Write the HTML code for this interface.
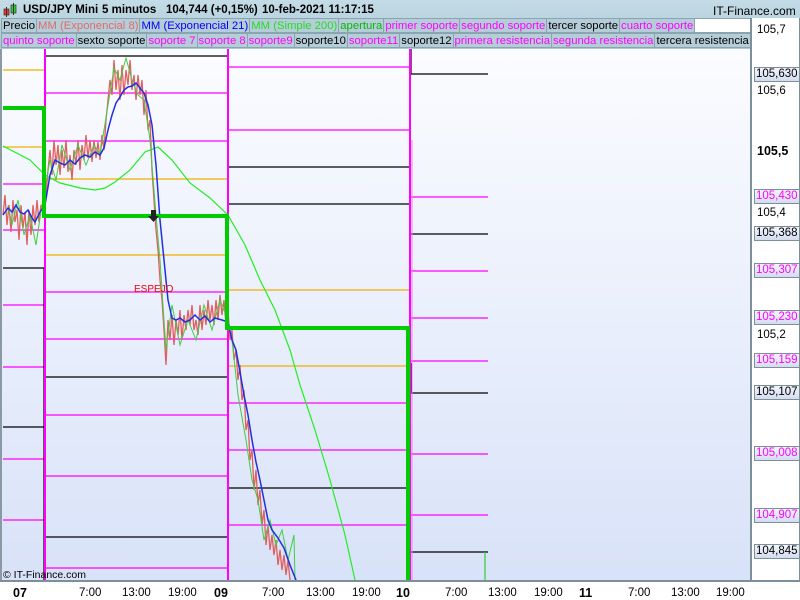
<!DOCTYPE html>
<html><head><meta charset="utf-8"><style>
*{margin:0;padding:0;box-sizing:border-box}
body{width:800px;height:600px;overflow:hidden;font-family:"Liberation Sans",sans-serif;background:#fff;position:relative}
#hdr{position:absolute;left:0;top:0;width:800px;height:49px;background:linear-gradient(#c4dce6,#a9c9d6);}
.t{position:absolute;top:4px;font-size:11.5px;font-weight:bold;color:#000;white-space:nowrap}
.row{position:absolute;left:1px;height:15px;display:flex;font-size:11.3px;line-height:14px;width:750px;overflow:hidden}
.row span{background:#b5cdd8;border:1px solid #8aa4b0;padding:0 1px;margin-right:-1px;white-space:nowrap}
#ax{position:absolute;left:750px;top:18px;width:50px;height:582px;background:#fff;border-left:2px solid #7d909a;border-right:1px solid #7d909a}
.lb{position:absolute;left:754px;font-size:11.5px;line-height:13px;height:15px;padding:0 1px;white-space:nowrap}
.bx{border:1px solid #7d909a;background:linear-gradient(#f2f5fc,#d3dcf0)}
.m{color:#f0f}
#bt{position:absolute;left:0;top:580px;width:800px;height:20px;background:#fff;border-top:2px solid #7d909a;font-size:11.5px}
#bt span{position:absolute;top:5px}
</style></head><body>
<svg style="position:absolute;left:0;top:0" width="800" height="600">
<defs><linearGradient id="g" x1="0" y1="0" x2="0" y2="1"><stop offset="0" stop-color="#fbfcff"/><stop offset="1" stop-color="#d8e2f8"/></linearGradient></defs>
<rect x="0" y="49" width="751" height="532" fill="url(#g)"/>
<line x1="1" y1="0" x2="1" y2="600" stroke="#8a9aa4" stroke-width="2"/>
<g stroke-width="1.2" fill="none">
<g stroke="#f0b000"><line x1="3" y1="70" x2="44" y2="70"/><line x1="3" y1="147" x2="44" y2="147"/></g>
<g stroke="#f0f"><line x1="3" y1="184" x2="44" y2="184"/><line x1="3" y1="230" x2="44" y2="230"/><line x1="3" y1="305" x2="44" y2="305"/><line x1="3" y1="367" x2="44" y2="367"/><line x1="3" y1="459" x2="44" y2="459"/><line x1="3" y1="520" x2="44" y2="520"/></g>
<g stroke="#000"><polyline points="3,268 44,268 44,580"/><polyline points="3,427 44,427"/></g>
<g stroke="#000"><polyline points="45,56 227,56"/><line x1="45" y1="377" x2="227" y2="377"/><line x1="45" y1="537" x2="227" y2="537"/></g>
<g stroke="#f0f"><line x1="45" y1="93" x2="227" y2="93"/><line x1="45" y1="141" x2="227" y2="141"/><line x1="45" y1="292" x2="227" y2="292"/><line x1="45" y1="339" x2="227" y2="339"/><line x1="45" y1="415" x2="227" y2="415"/><line x1="45" y1="476" x2="227" y2="476"/><line x1="45" y1="568" x2="227" y2="568"/></g>
<g stroke="#f0b000"><line x1="45" y1="179" x2="227" y2="179"/><line x1="45" y1="255" x2="227" y2="255"/></g>
<g stroke="#f0f"><line x1="228" y1="67" x2="409" y2="67"/><line x1="228" y1="130" x2="409" y2="130"/><line x1="228" y1="403" x2="409" y2="403"/><line x1="228" y1="450" x2="409" y2="450"/><line x1="228" y1="525" x2="409" y2="525"/></g>
<g stroke="#000"><line x1="228" y1="167" x2="409" y2="167"/><line x1="228" y1="204" x2="409" y2="204"/><line x1="228" y1="488" x2="409" y2="488"/></g>
<g stroke="#f0b000"><line x1="228" y1="290" x2="409" y2="290"/><line x1="228" y1="366" x2="409" y2="366"/></g>
<g stroke="#000"><polyline points="411,49 411,74 488,74"/><line x1="411" y1="234" x2="488" y2="234"/><polyline points="411,363 411,393 488,393"/><line x1="411" y1="552" x2="488" y2="552"/></g>
<g stroke="#f0f"><line x1="411" y1="197" x2="488" y2="197"/><line x1="411" y1="271" x2="488" y2="271"/><line x1="411" y1="318" x2="488" y2="318"/><line x1="411" y1="361" x2="488" y2="361"/><line x1="411" y1="454" x2="488" y2="454"/><line x1="411" y1="515" x2="488" y2="515"/></g>
<line x1="485" y1="552" x2="485" y2="580" stroke="#3c3"/>
<g stroke="#f0f" stroke-width="2"><line x1="45" y1="49" x2="45" y2="580"/><line x1="228" y1="49" x2="228" y2="580"/><line x1="410" y1="49" x2="410" y2="580"/></g>
<polyline stroke="#2e2" points="3,146 30,160 45,175 60,183 80,188 95,190 105,188 115,182 130,170 145,152 158,147 172,160 190,183 210,198 228,215 245,245 260,280 275,310 290,350 300,385 315,430 330,480 345,535 355,580"/>
<polyline stroke="#e06060" stroke-width="1.3" points="3,215 5,195 7,225 9,205 11,232 13,200 15,222 17,210 19,240 21,205 23,228 25,212 27,245 29,210 31,235 33,205 35,225 37,200 39,222 41,205 43,212 46,195 48,170 50,150 52,175 54,140 56,165 58,145 60,175 62,150 64,168 66,140 68,172 70,155 72,180 74,150 76,165 78,140 80,170 82,145 84,160 86,135 88,158 90,140 92,162 94,140 96,158 98,142 100,160 102,135 104,150 106,120 108,100 110,80 112,95 114,60 116,90 118,70 120,100 122,65 124,95 126,70 128,85 130,60 132,90 134,75 136,100 138,75 140,95 142,80 144,115 146,90 148,130 150,120 152,170 154,200 156,230 158,250 160,280 162,300 164,330 166,365 168,320 170,340 172,315 174,345 176,320 178,335 180,310 182,340 184,315 186,330 188,310 190,325 192,305 194,330 196,320 198,335 200,305 202,330 204,310 206,325 208,300 210,320 212,305 214,325 216,300 218,320 220,295 222,315 224,300 226,325 228,310 230,340 232,330 234,360 236,350 238,380 240,365 242,400 244,390 246,430 248,420 250,460 252,450 254,490 256,470 258,505 260,490 262,525 264,510 266,545 268,525 270,550 272,535 274,555 276,540 278,565 280,550 282,570 284,555 286,575 288,560 290,580"/>
<polyline stroke="#4c4" stroke-width="1" points="8,205 12,225 18,200 24,235 30,215 36,245 42,205 50,160 56,180 62,145 70,170 78,145 86,165 94,145 100,155 108,105 114,68 120,80 126,58 132,80 138,95 144,100 150,140 156,215 160,260 166,350 172,305 180,345 188,320 196,340 204,305 212,330 220,300 226,315 232,340 238,395 246,440 252,480 258,500 264,540 270,520 276,545 282,530 288,560 294,535 295,580"/>
<polyline stroke="#2030e0" stroke-width="1.5" points="3,215 8,208 12,212 16,205 20,212 24,214 28,210 32,218 35,222 40,212 45,205 50,175 55,160 60,163 65,165 70,160 75,164 80,158 85,155 90,157 95,152 100,155 104,148 108,130 112,115 116,103 120,97 124,90 128,87 132,86 136,83 140,88 144,93 148,105 152,125 156,165 160,220 164,260 168,300 172,318 176,320 180,318 185,322 190,320 195,315 200,320 205,316 210,322 215,318 222,320 228,322 232,340 236,350 240,372 244,395 248,415 252,440 256,462 260,480 264,500 268,520 272,530 278,538 284,548 290,565 296,580"/>
<polyline stroke="#0c0" stroke-width="4" points="3,108 44,108 44,216 227,216 227,328 408,328 408,580"/>
<polyline stroke="#f080f0" stroke-width="1" points="412,140 412,580"/>
</g>
<path d="M151,210 h5 v6 h3 l-5.5,6 l-5.5,-6 h3z" fill="#222"/>
<text x="134" y="292" font-family="Liberation Sans" font-size="10" fill="#e00">ESPEJO</text>
<text x="3" y="578" font-family="Liberation Sans" font-size="10.5" fill="#000">© IT-Finance.com</text>
</svg>
<div id="hdr">
<svg style="position:absolute;left:3px;top:3px" width="14" height="14"><rect x="1" y="6" width="5" height="6" fill="#e33" stroke="#333" stroke-width="0.7"/><line x1="3.5" y1="4" x2="3.5" y2="14" stroke="#333"/><rect x="8" y="2" width="5" height="8" fill="#3c3" stroke="#333" stroke-width="0.7"/><line x1="10.5" y1="0" x2="10.5" y2="12" stroke="#333"/></svg>
<span class="t" style="left:23px">USD/JPY Mini</span>
<span class="t" style="left:102px">5 minutos</span>
<span class="t" style="left:166px">104,744 (+0,15%)</span>
<span class="t" style="left:262px">10-feb-2021 11:17:15</span>
<span class="t" style="left:713px;font-weight:normal;font-size:12px">IT-Finance.com</span>
</div>
<div class="row" style="top:18px">
<span>Precio</span><span style="color:#e36a6a">MM (Exponencial 8)</span><span style="color:#00f">MM (Exponencial 21)</span><span style="color:#2d2">MM (Simple 200)</span><span style="color:#0b0">apertura</span><span class="m">primer soporte</span><span class="m">segundo soporte</span><span>tercer soporte</span><span class="m">cuarto soporte</span><span style="background:#fff;width:80px"></span>
</div>
<div class="row" style="top:33px">
<span class="m">quinto soporte</span><span>sexto soporte</span><span class="m">soporte 7</span><span class="m">soporte 8</span><span class="m">soporte9</span><span>soporte10</span><span class="m">soporte11</span><span>soporte12</span><span class="m">primera resistencia</span><span class="m">segunda resistencia</span><span>tercera resistencia</span>
</div>
<div id="ax"></div>
<div class="lb" style="top:24px;left:756px">105,7</div>
<div class="lb bx" style="top:67px">105,630</div>
<div class="lb" style="top:85px;left:756px">105,6</div>
<div class="lb" style="top:145px;left:756px;font-weight:bold;font-size:12.5px">105,5</div>
<div class="lb bx m" style="top:189px">105,430</div>
<div class="lb" style="top:207px;left:756px">105,4</div>
<div class="lb bx" style="top:226px">105,368</div>
<div class="lb bx m" style="top:263px">105,307</div>
<div class="lb bx m" style="top:310px">105,230</div>
<div class="lb" style="top:329px;left:756px">105,2</div>
<div class="lb bx m" style="top:353px">105,159</div>
<div class="lb bx" style="top:385px">105,107</div>
<div class="lb bx m" style="top:446px">105,008</div>
<div class="lb bx m" style="top:508px">104,907</div>
<div class="lb bx" style="top:544px">104,845</div>
<div id="bt">
<span style="left:13px;font-weight:bold;font-size:12.5px;top:4px">07</span>
<span style="left:79px">7:00</span><span style="left:122px">13:00</span><span style="left:168px">19:00</span>
<span style="left:214px;font-weight:bold;font-size:12.5px;top:4px">09</span>
<span style="left:262px">7:00</span><span style="left:306px">13:00</span><span style="left:352px">19:00</span>
<span style="left:396px;font-weight:bold;font-size:12.5px;top:4px">10</span>
<span style="left:445px">7:00</span><span style="left:488px">13:00</span><span style="left:534px">19:00</span>
<span style="left:579px;font-weight:bold;font-size:12.5px;top:4px">11</span>
<span style="left:628px">7:00</span><span style="left:671px">13:00</span><span style="left:716px">19:00</span>
</div>
</body></html>
